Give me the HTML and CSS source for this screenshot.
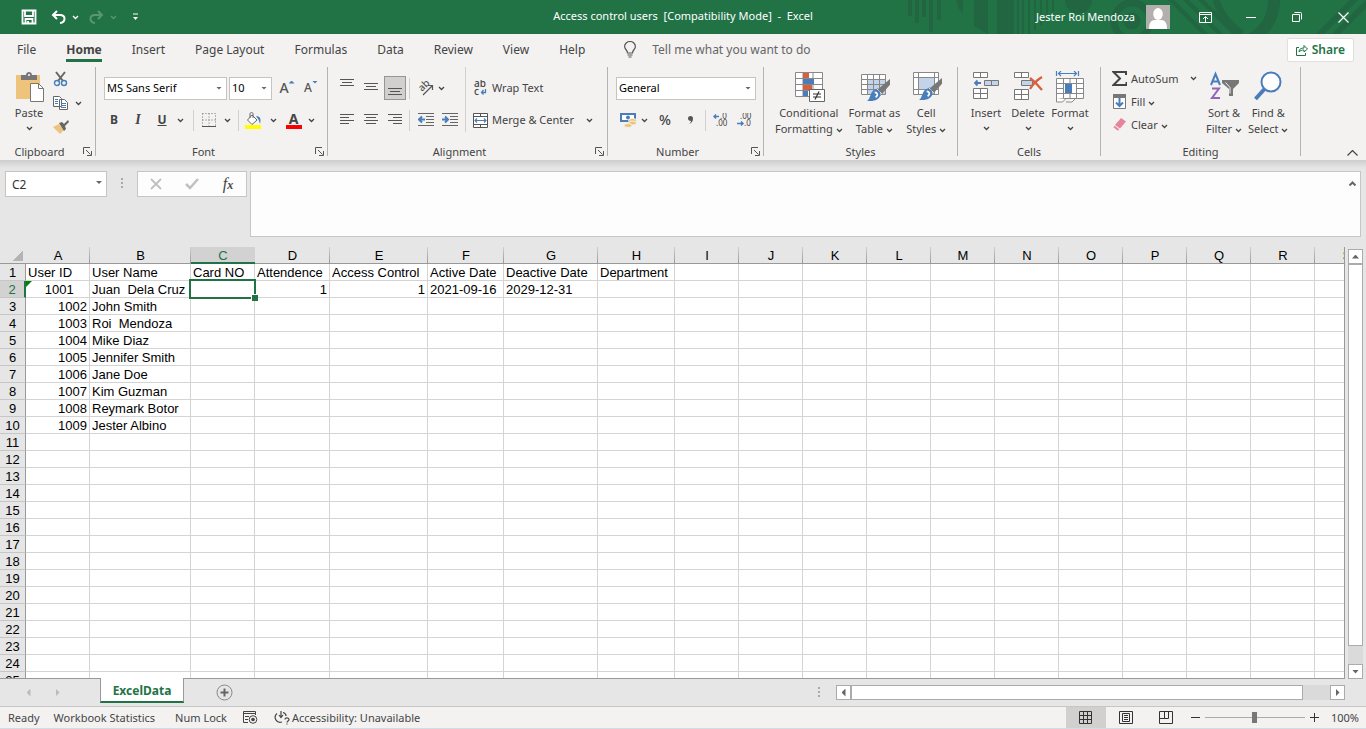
FILE: index.html
```html
<!DOCTYPE html>
<html lang="en">
<head>
  <meta charset="UTF-8" />
  <meta name="viewport" content="width=device-width, initial-scale=1.0" />
  <title>Access control users - Excel</title>
  <link rel="stylesheet" href="styles.css">
</head>
<body>
  <!-- Shared symbols -->
  <svg class="defs" aria-hidden="true">
    <symbol id="chev" viewBox="0 0 7 5"><path d="M1 1l2.500 2.500L6 1" fill="none" stroke="currentColor" stroke-width="1.300"/></symbol>
    <symbol id="launch" viewBox="0 0 9 9"><path d="M.5 7V.5H7M3 3l4.500 4.500M8.500 4v4.500H4" fill="none" stroke="#555"/></symbol>
    <symbol id="brush" viewBox="0 0 24 24"><path d="M24 0v6l-8 9-5-4z" fill="#777"/><path d="M11 10l5 5-2 2-5-5z" fill="#fff" stroke="#777"/><path d="M9 11c4 0 7 4 4 8-3 4-8 4-13 4 4-2 3-11 9-12z" fill="#4a7ebb"/><path d="M8 14c3 0 4 3 1 5" fill="none" stroke="#fff" stroke-width="1.800"/></symbol>
  </svg>

  <header class="titlebar">
    <svg class="pattern" width="486" height="34" aria-hidden="true">
      <g fill="#226541">
        <path d="M28 0h4v16h-4zM35 0h4v23h-4zM42 0h4v17h-4zM49 0h4v32h-4zM57 0h4v20h-4zM76 0h7v14C79 10 77 5 76 0zM94 0h14v34l-14-8zM117 0h17v34h-17zM137 0h2v34h-2zM142 0h2v34h-2zM148 0h2v34h-2zM154 0h2v30h-2zM160 0h2v25h-2zM166 0h2v20h-2zM172 0h2v12h-2zM185 0h27a13 13 0 0 1-27 0z"/>
        <path d="M388 0h12c0 13-5 25-13 34h-19c14-7 20-20 20-34zM436 34l34-34h8l-34 34zM452 34l34-34v8l-26 26zM288 0h6l34 34h-6zM303 0h6l34 34h-6zM318 0h6l34 34h-6z"/>
      </g>
      <g fill="none" stroke="#226541" stroke-width="7"><circle cx="252" cy="21" r="18"/><circle cx="252" cy="21" r="5"/><path d="M336 0c4 14 12 24 26 34"/></g>
    </svg>
    <div class="quick">
      <button class="save" aria-label="Save"><svg width="16" height="16" viewBox="0 0 16 16"><path d="M1.500 1.500h13v13h-13z M4 2v5h8V2M4.500 14v-4h7v4M7 12v2" fill="none" stroke="#fff" stroke-width="1.800"/></svg></button>
      <button aria-label="Undo"><svg width="15" height="14" viewBox="0 0 15 14"><path d="M6 1L2 5l4 4M2 5h7c6 0 6 7 0 8" fill="none" stroke="#fff" stroke-width="2"/></svg><svg class="chev"><use href="#chev"/></svg></button>
      <button class="off" aria-label="Redo"><svg width="15" height="14" viewBox="0 0 15 14"><path d="M9 1l4 4-4 4M13 5H6C0 5 0 12 6 13" fill="none" stroke="#fff" stroke-width="2"/></svg><svg class="chev"><use href="#chev"/></svg></button>
      <button class="custom" aria-label="Customize"><svg width="7" height="8" viewBox="0 0 7 8"><path d="M1 1h5" stroke="#fff"/><path d="M1 4h5L3.500 7z" fill="#fff"/></svg></button>
    </div>
    <h1>Access control users&nbsp; [Compatibility Mode]&nbsp; -&nbsp; Excel</h1>
    <div class="account">
      <span>Jester Roi Mendoza</span>
      <svg width="24" height="24" viewBox="0 0 24 24"><path fill="#b2afac" d="M0 0h24v24H0z"/><ellipse cx="12" cy="9" rx="4.800" ry="6" fill="#fff"/><path d="M3 24c0-6 2-9 6-9h6c4 0 6 3 6 9z" fill="#fff"/></svg>
      <div class="window-buttons">
        <button aria-label="Ribbon options"><svg width="13" height="11" viewBox="0 0 13 11"><path d="M.5.5h12v10H.5zM.5 2.500h12M6.500 10V5M4 7l2.500-2.500L9 7" fill="none" stroke="#fff"/></svg></button>
        <button aria-label="Minimize"><svg width="10" height="11" viewBox="0 0 10 11"><path d="M0 5.500h10" stroke="#fff"/></svg></button>
        <button aria-label="Restore"><svg width="11" height="11" viewBox="0 0 11 11"><path d="M.5 2.500h7v7h-7zM2.500.5h6q1 0 1 1v6" fill="none" stroke="#fff"/></svg></button>
        <button aria-label="Close"><svg width="11" height="11" viewBox="0 0 11 11"><path d="M.5.5l10 10M10.500.5l-10 10" stroke="#fff" stroke-width="1.200"/></svg></button>
      </div>
    </div>
  </header>

  <nav class="tabs">
    <button>File</button>
    <button class="active">Home</button>
    <button>Insert</button>
    <button>Page Layout</button>
    <button>Formulas</button>
    <button>Data</button>
    <button>Review</button>
    <button>View</button>
    <button>Help</button>
    <label class="tell">
      <svg width="12" height="17" viewBox="0 0 12 17"><path d="M3.500 12C3.500 9 .6 8.500.6 5.500a5.400 5 0 0 1 10.800 0c0 3-2.900 3.500-2.900 6.500zM3.500 14h5M4.500 16h3" fill="none" stroke="#555" stroke-width="1.200"/></svg>
      <input type="text" placeholder="Tell me what you want to do" aria-label="Tell me what you want to do">
    </label>
    <button class="share"><svg width="12" height="12" viewBox="0 0 12 12"><path d="M3 3.500H.5v8h9V9M3 8c0-3 2-4 5-4V1.500l3.500 3.500L8 8V6C6 6 4 6.500 3 8z" fill="none" stroke="#217346"/></svg>Share</button>
  </nav>

  <section class="ribbon">
    <div class="group clipboard">
      <div class="tools">
        <button class="big"><svg width="30" height="32" viewBox="0 0 30 32"><path d="M2 4h24v24H2z" fill="#eec47c"/><path d="M7 4h5c0-4 6-4 6 0h5v5H7z" fill="#777"/><circle cx="15" cy="4" r="1" fill="#fff"/><path d="M16.500 12.500h8l5 5v13h-13z" fill="#fff" stroke="#777"/><path d="M24.500 12.500v5h5" fill="none" stroke="#777"/></svg>Paste<svg class="chev"><use href="#chev"/></svg></button>
        <div class="stack">
          <button aria-label="Cut"><svg width="16" height="16" viewBox="0 0 16 16"><path d="M3 1l7 9M12 1l-7 9" stroke="#666" stroke-width="2"/><circle cx="4" cy="12" r="2.500" fill="none" stroke="#4a7ebb" stroke-width="1.400"/><circle cx="11" cy="12" r="2.500" fill="none" stroke="#4a7ebb" stroke-width="1.400"/></svg></button>
          <button aria-label="Copy"><svg width="16" height="16" viewBox="0 0 16 16"><path d="M.5 1.500h6l2 2v8h-8z M6.500 4.500h5l3 3v7h-8z" fill="#fff" stroke="#666"/><path d="M2 4.500h3M2 6.500h3M2 8.500h3M8 8.500h5M8 10.500h5M8 12.500h5" stroke="#4a7ebb"/></svg><svg class="chev"><use href="#chev"/></svg></button>
          <button aria-label="Format Painter"><svg width="16" height="16" viewBox="0 0 16 16"><path d="M0 8l6-3 5 6-4 4z" fill="#eec47c"/><path d="M6 4l3-1 2 2 4-4 1 2-4 4 1 3-2 2z" fill="#666"/></svg></button>
        </div>
      </div>
      <div class="caption"><span>Clipboard</span><button aria-label="Clipboard settings"><svg><use href="#launch"/></svg></button></div>
    </div>

    <div class="group font">
      <div class="tools rows">
        <div class="row">
          <label class="pick family"><select aria-label="Font"><option>MS Sans Serif</option></select></label>
          <label class="pick size"><select aria-label="Font size"><option>10</option></select></label>
          <button class="grow large" aria-label="Increase font size"><b>A</b><i class="up"></i></button>
          <button class="grow" aria-label="Decrease font size"><b>A</b><i class="down"></i></button>
        </div>
        <div class="row letters">
          <button><b>B</b></button>
          <button class="italic"><i>I</i></button>
          <button><b><u>U</u></b></button>
          <button class="more" aria-label="Underline options"><svg class="chev"><use href="#chev"/></svg></button>
          <span class="bar"></span>
          <button class="wide" aria-label="Borders"><svg width="14" height="14" viewBox="0 0 14 14"><path d="M.5.500h13v13M.5.500v13M7 .5v13M.5 7h13" fill="none" stroke="#777" stroke-dasharray="1 2"/><path d="M0 13.500h14" stroke="#555" stroke-width="1"/></svg><svg class="chev"><use href="#chev"/></svg></button>
          <span class="bar"></span>
          <button class="wide" aria-label="Fill color"><svg width="17" height="17" viewBox="0 0 17 17"><path d="M7 3l5 5-5 4.500L2.500 8z" fill="#fff" stroke="#666"/><path d="M5 6V2c0-2 3-2 3 0v4" fill="none" stroke="#666"/><path d="M11 4c5 0 5 4 4 8-1-3-1-4-2-5z" fill="#4a7ebb"/><path fill="#ff0" d="M0 13h16v4H0z"/></svg><svg class="chev"><use href="#chev"/></svg></button>
          <button class="wide color" aria-label="Font color"><b>A</b><svg class="chev"><use href="#chev"/></svg></button>
        </div>
      </div>
      <div class="caption"><span>Font</span><button aria-label="Font settings"><svg><use href="#launch"/></svg></button></div>
    </div>

    <div class="group align">
      <div class="tools">
        <div class="rows">
          <div class="row icons">
            <button aria-label="Top align"><svg width="14" height="18"><path d="M0 .5h14M2 3.500h10M0 6.500h14" stroke="#555"/></svg></button>
            <button aria-label="Middle align"><svg width="14" height="18"><path d="M0 4.500h14M2 7.500h10M0 10.500h14" stroke="#555"/></svg></button>
            <button class="pressed" aria-label="Bottom align"><svg width="14" height="18"><path d="M0 9.500h14M2 12.500h10M0 15.500h14" stroke="#555"/></svg></button>
            <span class="bar"></span>
            <button class="wide" aria-label="Orientation"><svg width="17" height="16" viewBox="0 0 17 16"><text x="0" y="0" transform="translate(5 12) rotate(-45)" class="slant">ab</text><path d="M6 15l9-9M11 5.500h4.500V10" fill="none" stroke="#555" stroke-width="1.200"/></svg><svg class="chev"><use href="#chev"/></svg></button>
          </div>
          <div class="row icons">
            <button aria-label="Align left"><svg width="14" height="14"><path d="M0 1.500h14M0 4.500h9M0 7.500h14M0 10.500h9" stroke="#555"/></svg></button>
            <button aria-label="Center"><svg width="14" height="14"><path d="M0 1.500h14M2 4.500h10M0 7.500h14M2 10.500h10" stroke="#555"/></svg></button>
            <button aria-label="Align right"><svg width="14" height="14"><path d="M0 1.500h14M5 4.500h9M0 7.500h14M5 10.500h9" stroke="#555"/></svg></button>
            <span class="bar"></span>
            <button aria-label="Decrease indent"><svg width="16" height="14"><path d="M0 .5h16M8 3.500h8M8 6.500h8M8 9.500h8M0 12.500h16" stroke="#666"/><path d="M7 6.500H1M4 3.500l-3 3 3 3" fill="none" stroke="#4a7ebb" stroke-width="2"/></svg></button>
            <button aria-label="Increase indent"><svg width="16" height="14"><path d="M0 .5h16M8 3.500h8M8 6.500h8M8 9.500h8M0 12.500h16" stroke="#666"/><path d="M0 6.500h6M3 3.500l3 3-3 3" fill="none" stroke="#4a7ebb" stroke-width="2"/></svg></button>
          </div>
        </div>
        <div class="rows wraps">
          <div class="row"><button class="text"><svg width="15" height="16" viewBox="0 0 15 16"><text x="1" y="7" class="abc">ab</text><text x="1" y="15" class="abc">c</text><path d="M12.500 9v3.500H8.500M10.500 10l-2 2.500 2 2" fill="none" stroke="#4a7ebb" stroke-width="1.300"/></svg>Wrap Text</button></div>
          <div class="row"><button class="text"><svg width="15" height="15" viewBox="0 0 15 15"><path d="M.5.5h14v14H.5zM.5 3.500h14M.5 11.500h14M7.500.5v3M7.500 11.500v3" fill="#fff" stroke="#555"/><path d="M2 7.500h11M4 5.500l-2 2 2 2M11 5.500l2 2-2 2" fill="none" stroke="#4a7ebb" stroke-width="1.200"/></svg>Merge &amp; Center</button><button aria-label="Merge options"><svg class="chev"><use href="#chev"/></svg></button></div>
        </div>
      </div>
      <div class="caption"><span>Alignment</span><button aria-label="Alignment settings"><svg><use href="#launch"/></svg></button></div>
    </div>

    <div class="group number">
      <div class="tools rows">
        <div class="row"><label class="pick format"><select aria-label="Number format"><option>General</option></select></label></div>
        <div class="row numbers">
          <button class="wide" aria-label="Accounting format"><svg width="17" height="17" viewBox="0 0 17 17"><path fill="#4a7ebb" d="M0 1h16v9H0z"/><path fill="#fff" d="M2 3h12v5H2z"/><circle cx="8" cy="5.500" r="2" fill="#4a7ebb"/><g fill="#eec47c" stroke="#f3f2f1"><ellipse cx="12.500" cy="8.500" rx="4" ry="2"/><ellipse cx="12.500" cy="11" rx="4" ry="2"/><ellipse cx="8" cy="13.500" rx="4" ry="2"/></g></svg><svg class="chev"><use href="#chev"/></svg></button>
          <button class="percent">%</button>
          <button class="comma" aria-label="Comma style"><svg width="5" height="8"><path d="M0 2.500a2.500 2.500 0 1 1 5 0C5 5 4 7 1 8c1-1 2-2 2-3C1 5 0 4 0 2.500z" fill="#555"/></svg></button>
          <span class="bar"></span>
          <button aria-label="Increase decimal"><svg width="16" height="14" viewBox="0 0 16 14"><text x="7" y="6" class="dec">.0</text><text x="3" y="13" class="dec">.00</text><path d="M6 3.500H1M3 1.500l-2 2 2 2" fill="none" stroke="#4a7ebb" stroke-width="1.500"/></svg></button>
          <button aria-label="Decrease decimal"><svg width="16" height="14" viewBox="0 0 16 14"><text x="3" y="6" class="dec">.00</text><text x="7" y="13" class="dec">.0</text><path d="M0 10.500h6M4 8.500l2 2-2 2" fill="none" stroke="#4a7ebb" stroke-width="1.500"/></svg></button>
        </div>
      </div>
      <div class="caption"><span>Number</span><button aria-label="Number settings"><svg><use href="#launch"/></svg></button></div>
    </div>

    <div class="group styles">
      <div class="tools">
        <button class="big"><svg width="32" height="32" viewBox="0 0 32 32"><path d="M2.500 1.500h27v24h-27zM10 1.500v24M20 1.500v24M2.500 7.500h27M2.500 13.500h27M2.500 19.500h27" fill="#fff" stroke="#888"/><path fill="#d65f3d" d="M10 2h6v5h-6zM10 14h9v5h-9z"/><path fill="#4a7ebb" d="M10 8h11v5H10zM10 20h5v5h-5z"/><path d="M16.500 18.500h15v12h-15z" fill="#fff" stroke="#666"/><path d="M20 23h8M20 26h8M26 20.500l-4 8" stroke="#333" stroke-width="1.200"/></svg><span>Conditional<br>Formatting <svg class="chev"><use href="#chev"/></svg></span></button>
        <button class="big"><svg width="32" height="32" viewBox="0 0 32 32"><path d="M3.500 3.500h24v20h-24z" fill="#fff"/><path d="M9 8h18v15H9z" fill="#c2d3ea"/><path d="M3.500 3.500h24v20h-24zM9.500 3.500v20M15.500 3.500v20M21.500 3.500v20M3.500 8.500h24M3.500 13.500h24M3.500 18.500h24" fill="none" stroke="#888"/><use href="#brush" x="9" y="8" width="23" height="23"/></svg><span>Format as<br>Table <svg class="chev"><use href="#chev"/></svg></span></button>
        <button class="big"><svg width="32" height="32" viewBox="0 0 32 32"><path d="M3.500 1.500h25v22h-25zM8.500 1.500v22M24.500 1.500v22M3.500 6.500h25M3.500 18.500h25" fill="#fff" stroke="#888"/><path d="M9 7h15v11H9z" fill="#c2d3ea"/><use href="#brush" x="9" y="7" width="23" height="23"/></svg><span>Cell<br>Styles <svg class="chev"><use href="#chev"/></svg></span></button>
      </div>
      <div class="caption"><span>Styles</span></div>
    </div>

    <div class="group cells">
      <div class="tools">
        <button class="big"><svg width="28" height="32" viewBox="0 0 28 32"><path d="M1.500 1.500h14v5h-14zM8.500 1.500v5M1.500 17.500h14v10h-14zM8.500 17.500v10M1.500 22.500h14" fill="#fff" stroke="#777"/><path d="M12.500 9.500h14v5h-14zM19.500 9.500v5" fill="#c2d3ea" stroke="#777"/><path d="M9 12H3M5.500 9.500L3 12l2.500 2.500" fill="none" stroke="#4a7ebb" stroke-width="1.800"/></svg>Insert<svg class="chev"><use href="#chev"/></svg></button>
        <button class="big"><svg width="32" height="32" viewBox="0 0 32 32"><path d="M2.500 1.500h14v5h-14zM9.500 1.500v5M2.500 18.500h14v10h-14zM9.500 18.500v10M2.500 23.500h14" fill="#fff" stroke="#777"/><path d="M9.500 9.500h11v5h-11z" fill="#c2d3ea" stroke="#777"/><path d="M18 7c4 3 8 7 12 12M30 6c-5 3-9 7-12 12" fill="none" stroke="#d65f3d" stroke-width="2.200"/></svg>Delete<svg class="chev"><use href="#chev"/></svg></button>
        <button class="big"><svg width="30" height="32" viewBox="0 0 30 32"><path d="M1.500 7.500h27v20h-27zM8.500 7.500v20M21.500 7.500v20M15 7.500v5M15 22v5M1.500 12.500h27M1.500 22.500h27M1.500 17.500h7M21.500 17.500h7" fill="#fff" stroke="#888"/><path fill="#4a7ebb" d="M10 13h7v9h-7z"/><path d="M1.500 27v4h6l3-3M11 31h6l3-3" fill="#fff" stroke="#888"/><path d="M1.500 0v5M23.500 0v5M3 2.500h19M6 0L3.500 2.500 6 5M19 0l2.500 2.500L19 5" fill="none" stroke="#4a7ebb" stroke-width="1.200"/></svg>Format<svg class="chev"><use href="#chev"/></svg></button>
      </div>
      <div class="caption"><span>Cells</span></div>
    </div>

    <div class="group editing">
      <div class="tools">
        <div class="list">
          <button class="text sum"><svg width="15" height="16" viewBox="0 0 15 16"><path d="M14 4V1H1.500L8 7.500 1.500 14H14.500v-3" fill="none" stroke="#444" stroke-width="2"/></svg>AutoSum<svg class="chev"><use href="#chev"/></svg></button>
          <button class="text"><svg width="15" height="15" viewBox="0 0 15 15"><path d="M1.500.5h12v14h-12z" fill="#fff" stroke="#777"/><path d="M1 0h13v4H1z" fill="#777"/><path d="M7.500 4v8M4 8.500L7.500 12 11 8.500" fill="none" stroke="#4a7ebb" stroke-width="2"/></svg><span>Fill <svg class="chev"><use href="#chev"/></svg></span></button>
          <button class="text"><svg width="15" height="15" viewBox="0 0 15 15"><path d="M3 8l6-7 5 3.500-6 7z" fill="#e8839b"/><path d="M2 9.500l4.500 3.500" stroke="#e8839b" stroke-width="2"/></svg><span>Clear <svg class="chev"><use href="#chev"/></svg></span></button>
        </div>
        <button class="big"><svg width="32" height="32" viewBox="0 0 32 32"><path d="M3 14L7.500 3 12 14M4.500 10.500h6" fill="none" stroke="#4a7ebb" stroke-width="2"/><path d="M4 17.500h7L4 27h8" fill="none" stroke="#9464b8" stroke-width="2"/><path d="M14 9h17v3l-6 6v7h-4v-7l-7-6z" fill="#777"/><path d="M17.500 11.500l4.500 5v6" fill="none" stroke="#f3f2f1"/></svg><span>Sort &amp;<br>Filter <svg class="chev"><use href="#chev"/></svg></span></button>
        <button class="big"><svg width="30" height="32" viewBox="0 0 30 32"><path d="M2.500 28l9-10" stroke="#4a7ebb" stroke-width="4"/><circle cx="18" cy="11" r="9.500" fill="#fff" stroke="#4a7ebb" stroke-width="2"/></svg><span>Find &amp;<br>Select <svg class="chev"><use href="#chev"/></svg></span></button>
      </div>
      <div class="caption"><span>Editing</span></div>
    </div>
    <button class="collapse" aria-label="Collapse the ribbon"><svg width="11" height="6"><path d="M.5 5.500l5-5 5 5" fill="none" stroke="#444" stroke-width="1.200"/></svg></button>
  </section>

  <section class="formula">
    <label class="pick namebox"><input type="text" value="C2" aria-label="Name Box"></label>
    <span class="dots"></span>
    <div class="fx">
      <button aria-label="Cancel"><svg width="12" height="12"><path d="M1 1l10 10M11 1L1 11" stroke="#c0c0c0" stroke-width="1.800"/></svg></button>
      <button aria-label="Enter"><svg width="14" height="12"><path d="M1 6l4 4 8-9" fill="none" stroke="#c0c0c0" stroke-width="2.500"/></svg></button>
      <button class="fn"><i>f<small>x</small></i></button>
    </div>
    <div class="input">
      <textarea aria-label="Formula bar"></textarea>
      <button aria-label="Collapse formula bar"><svg width="7" height="5"><path d="M.5 4.500l3-3 3 3" fill="none" stroke="#666" stroke-width="2"/></svg></button>
    </div>
  </section>

  <main>
    <div class="sheet"><table id="grid"></table></div>
    <div class="vscroll">
      <button aria-label="Scroll up"><i class="up"></i></button>
      <div class="thumb"></div>
      <button aria-label="Scroll down"><i class="down"></i></button>
    </div>
  </main>

  <div class="sheets">
    <button class="arrow" aria-label="Previous sheet"><i class="left"></i></button>
    <button class="arrow" aria-label="Next sheet"><i class="right"></i></button>
    <button class="sheet-tab">ExcelData</button>
    <button class="add" aria-label="New sheet"><svg width="17" height="17"><circle cx="8.500" cy="8.500" r="7.500" fill="none" stroke="#888"/><path d="M8.500 4.500v8M4.500 8.500h8" stroke="#666" stroke-width="2"/></svg></button>
    <span class="dots"></span>
    <div class="hscroll">
      <button aria-label="Scroll left"><i class="left"></i></button>
      <div class="thumb"></div>
      <button aria-label="Scroll right"><i class="right"></i></button>
    </div>
  </div>

  <footer class="status">
    <span class="ready">Ready</span>
    <span class="stats">Workbook Statistics</span>
    <span>Num Lock</span>
    <button aria-label="Record macro"><svg width="15" height="13" viewBox="0 0 15 13"><path d="M5 11.500H.5V.5h12V4M.5 2.500h12M2 5.500h4M2 8.500h3" fill="none" stroke="#444"/><circle cx="10" cy="8.500" r="3.800" fill="#f3f2f1" stroke="#444"/><circle cx="10" cy="8.500" r="1.800" fill="#444"/></svg></button>
    <button class="text access"><svg width="16" height="14" viewBox="0 0 16 14"><path d="M3 2.500A5 5 0 0 0 8 11M7 0v6M5 4l2 2.500L9 4M9 1.500c2 .5 3 2 3 3.500" fill="none" stroke="#444" stroke-width="1.200"/><path d="M11 8.500c0-2.500 4-2 4 0 0 1.500-2 1.500-2 3M13 12.500v1" fill="none" stroke="#444" stroke-width="1.200"/></svg>Accessibility: Unavailable</button>
    <div class="views">
      <button class="active" aria-label="Normal"><svg width="13" height="13"><path d="M.5.5h12v12H.5zM4.500.5v12M8.500.5v12M.5 4.500h12M.5 8.500h12" fill="none" stroke="#333"/></svg></button>
      <button aria-label="Page layout"><svg width="14" height="13"><path d="M.5.5h13v12H.5zM3.500 2.500h7v8h-7zM5 4.500h4M5 6.500h4M5 8.500h4" fill="none" stroke="#333"/></svg></button>
      <button aria-label="Page break preview"><svg width="14" height="13"><path d="M.5.500h13v12H.5zM.5 7.500h9v-7M5.500.5v7" fill="none" stroke="#333"/></svg></button>
    </div>
    <div class="zoom">
      <button aria-label="Zoom out"><svg width="9" height="9"><path d="M0 4.500h9" stroke="#333"/></svg></button>
      <input type="range" min="0" max="100" value="50" aria-label="Zoom">
      <button aria-label="Zoom in"><svg width="9" height="9"><path d="M0 4.500h9M4.500 0v9" stroke="#333"/></svg></button>
      <span>100%</span>
    </div>
  </footer>

  <script>
    const widths = [64, 101, 64, 75, 98, 76, 94, 77];
    const letters = 'ABCDEFGHIJKLMNOPQRSTUVWXYZ'.split('');
    const data = [
      ['User ID', 'User Name', 'Card NO', 'Attendence', 'Access Control', 'Active Date', 'Deactive Date', 'Department'],
      [' 1001', 'Juan  Dela Cruz', '', 1, 1, '2021-09-16', '2029-12-31'],
      [1002, 'John Smith'],
      [1003, 'Roi  Mendoza'],
      [1004, 'Mike Diaz'],
      [1005, 'Jennifer Smith'],
      [1006, 'Jane Doe'],
      [1007, 'Kim Guzman'],
      [1008, 'Reymark Botor'],
      [1009, 'Jester Albino']
    ];

    let html = '<colgroup><col style="width:26px">';
    letters.forEach((l, i) => html += `<col style="width:${widths[i] || 64}px">`);
    html += '</colgroup><thead><tr><th class="corner"></th>';
    letters.forEach(l => html += `<th class="${l === 'C' ? 'selected' : ''}">${l}</th>`);
    html += '</tr></thead><tbody>';
    for (let r = 0; r < 40; r++) {
      html += `<tr><th class="${r === 1 ? 'selected' : ''}">${r + 1}</th>`;
      letters.forEach((l, c) => {
        const value = data[r] && data[r][c] !== undefined ? data[r][c] : '';
        let cls = typeof value === 'number' ? 'num' : '';
        if (r === 1 && c === 0) cls = 'flag';
        if (r === 1 && c === 2) cls = 'current';
        html += `<td class="${cls}">${value}</td>`;
      });
      html += '</tr>';
    }
    document.getElementById('grid').innerHTML = html + '</tbody>';
  </script>
</body>
</html>
```
FILE: styles.css
```css
* {
  box-sizing: border-box;
}
body {
  margin: 0;
  height: 100vh;
  display: flex;
  flex-direction: column;
  overflow: hidden;
  font-family: 'Noto Sans', 'Segoe UI', sans-serif;
  font-size: 11px;
  line-height: 16px;
  color: #444;
  background: #e6e6e6;
}
button, input, select, textarea {
  font: inherit;
  color: inherit;
}
button {
  background: transparent;
  border: none;
  padding: 0;
  display: flex;
  align-items: center;
  justify-content: center;
  white-space: nowrap;
}
svg {
  flex: none;
}
.defs {
  position: absolute;
  width: 0;
  height: 0;
}
.chev {
  width: 7px;
  height: 5px;
}

/* Small triangles */
.up, .down, .left, .right {
  width: 7px;
  height: 4px;
  background: #666;
}
.up {
  clip-path: polygon(50% 0, 100% 100%, 0 100%);
}
.down {
  clip-path: polygon(0 0, 100% 0, 50% 100%);
}
.left, .right {
  width: 4px;
  height: 8px;
}
.left {
  clip-path: polygon(100% 0, 100% 100%, 0 50%);
}
.right {
  clip-path: polygon(0 0, 100% 50%, 0 100%);
}

/* Title bar */
.titlebar {
  position: relative;
  flex: none;
  height: 34px;
  background: #217346;
  color: #fff;
  display: flex;
  align-items: center;
}
.pattern {
  position: absolute;
  right: 0;
  top: 0;
}
.quick {
  display: flex;
  align-items: center;
  gap: 10px;
  flex: 1 1 0;
}
.quick button {
  gap: 6px;
}
.quick .save {
  margin: 0 4px 0 21px;
}
.quick .off {
  opacity: 0.25;
}
.quick .custom {
  margin-left: 5px;
}
.titlebar h1 {
  margin: 0;
  font-size: 11px;
  line-height: 18px;
  padding-bottom: 2px;
  font-weight: 400;
}
.account {
  position: relative;
  flex: 1 1 0;
  display: flex;
  justify-content: flex-end;
  align-items: center;
}
.account span {
  margin-right: 11px;
}
.window-buttons {
  display: flex;
  padding-left: 12px;
}
.window-buttons button {
  width: 46px;
  height: 32px;
}

/* Ribbon tabs */
.tabs {
  flex: none;
  height: 33px;
  display: flex;
  align-items: center;
  padding: 0 12px 2px 2px;
  background: #f3f2f1;
  font-size: 12px;
}
.tabs button {
  position: relative;
  height: 30px;
  padding: 0 15px;
}
.tabs .active {
  font-weight: 700;
}
.tabs .active::after {
  content: '';
  position: absolute;
  left: 15px;
  right: 15px;
  bottom: 3px;
  height: 3px;
  background: #217346;
}
.tell {
  display: flex;
  align-items: center;
  flex: 1;
  gap: 16px;
  padding-left: 24px;
}
.tell input {
  width: 200px;
  padding: 0;
  border: none;
  outline: none;
  background: transparent;
}
.tell input::placeholder {
  color: #666;
  opacity: 1;
}
.tabs .share {
  height: 24px;
  padding: 0 8px;
  gap: 4px;
  background: #fff;
  border: 1px solid #e1dfdd;
  border-radius: 2px;
  color: #217346;
  font-weight: 600;
}

/* Ribbon */
.ribbon {
  flex: none;
  display: flex;
  height: 93px;
  padding-bottom: 4px;
  background: #f3f2f1;
}
.group {
  flex: none;
  display: flex;
  flex-direction: column;
  border-right: 1px solid #b5b3b1;
}
.tools {
  flex: 1;
  display: flex;
  align-items: flex-start;
}
.caption {
  display: flex;
  align-items: center;
  height: 13px;
  line-height: 13px;
  margin-bottom: -2px;
}
.caption span {
  flex: 1;
  text-align: center;
}
.caption button {
  width: 16px;
}
.caption svg {
  width: 9px;
  height: 9px;
}
.big {
  flex-direction: column;
  padding-top: 4px;
}
.big > svg:first-child {
  margin-bottom: 2px;
}
.big > .chev {
  margin-top: 5px;
}
.rows {
  display: flex;
  flex-direction: column;
  align-items: flex-start;
  padding-top: 9px;
  gap: 8px;
}
.row {
  display: flex;
  align-items: center;
  height: 24px;
}
.row button {
  height: 24px;
}
.bar {
  width: 1px;
  height: 21px;
  background: #d2d0ce;
}
.text {
  gap: 4px;
}
.wide {
  gap: 8px;
}
.pick {
  position: relative;
  height: 23px;
  background: #fff;
  border: 1px solid #c6c4c2;
  color: #000;
}
.pick::after {
  content: '';
  position: absolute;
  right: 4px;
  top: 9px;
  width: 6px;
  height: 3px;
  background: #666;
  clip-path: polygon(0 0, 100% 0, 50% 100%);
}
.pick select, .pick input {
  appearance: none;
  display: block;
  width: 100%;
  height: 100%;
  padding: 0 2px;
  border: none;
  background: transparent;
  outline: none;
}

.clipboard {
  width: 96px;
}
.clipboard .tools {
  padding-left: 14px;
}
.stack {
  padding: 4px 0 0 9px;
  display: flex;
  flex-direction: column;
  align-items: flex-start;
  gap: 8px;
}
.stack button {
  gap: 6px;
}

.font {
  width: 232px;
}
.font .tools {
  padding-left: 8px;
}
.family {
  width: 123px;
}
.size {
  width: 43px;
  margin-left: 2px;
}
.grow {
  width: 24px;
  color: #555;
  font-size: 12px;
}
.large {
  margin-left: 3px;
  font-size: 14px;
}
.grow .up, .grow .down {
  width: 6px;
  height: 3px;
  margin-bottom: 12px;
  background: #4a7ebb;
}
.grow b {
  font-weight: 500;
}
.letters {
  margin-left: -2px;
}
.letters button {
  width: 24px;
  font-size: 12px;
}
.letters .italic {
  font-family: 'Liberation Serif', serif;
  font-weight: 700;
  font-size: 14px;
}
.letters .more {
  width: 12px;
  margin-right: 7px;
}
.letters .wide {
  width: 44px;
}
.letters .color {
  width: 34px;
  gap: 6px;
}
.color b {
  width: 16px;
  height: 17px;
  line-height: 14px;
  font-size: 14px;
  border-bottom: 4px solid #f00;
}

.align {
  width: 280px;
}
.align .tools {
  padding-left: 7px;
}
.icons button {
  width: 24px;
}
.icons .pressed {
  width: 22px;
  margin: 0 1px;
  background: #d2d0ce;
  border: 1px solid #979593;
}
.icons .bar {
  margin: 0 4px 0 2px;
}
.icons .wide {
  width: 34px;
  gap: 4px;
}
.wraps {
  margin-left: 3px;
  padding-left: 7px;
  border-left: 1px solid #d2d0ce;
}
.wraps button + button {
  margin-left: 12px;
}
.slant {
  font-size: 10px;
  font-weight: 500;
  fill: #555;
}
.abc {
  font-size: 10px;
  font-weight: 500;
  fill: #444;
}

.number {
  width: 156px;
}
.number .tools {
  padding-left: 8px;
}
.format {
  width: 140px;
}
.numbers button {
  width: 24px;
}
.numbers .wide {
  width: 36px;
  gap: 4px;
}
.numbers .percent {
  width: 26px;
  font-size: 14px;
  font-weight: 500;
}
.numbers .bar {
  margin: 0 3px;
}
.dec {
  font-size: 8px;
  fill: #444;
}

.styles {
  width: 194px;
}
.styles .tools {
  padding-left: 11px;
  gap: 6px;
}
.cells {
  width: 143px;
}
.cells .tools {
  padding-left: 10px;
  gap: 6px;
}
.cells .big {
  width: 36px;
}
.editing {
  width: 200px;
}
.editing .tools {
  padding-left: 11px;
}
.editing .list {
  width: 94px;
}
.list button {
  height: 23px;
}
.list .sum .chev {
  margin-left: 7px;
}
.editing .big + .big {
  margin-left: 6px;
}
.collapse {
  margin-left: auto;
  align-self: flex-end;
  padding: 0 8px 0 0;
}

/* Formula bar */
.formula {
  flex: none;
  display: flex;
  align-items: flex-start;
  padding: 11px 5px 10px;
  background: linear-gradient(#cdcdcd, #e6e6e6 8px);
}
.namebox {
  width: 102px;
  height: 26px;
  font-size: 12px;
}
.namebox input {
  padding-left: 6px;
  color: #333;
}
.dots {
  width: 2px;
  height: 11px;
  margin: 7px 14px;
  background: repeating-linear-gradient(#aaa 0 2px, transparent 2px 4px);
}
.fx {
  display: flex;
  width: 110px;
  height: 26px;
  background: #fdfdfd;
  border: 1px solid #c6c6c6;
}
.fx button {
  flex: 1;
}
.fn {
  font-family: 'Liberation Serif', serif;
  font-size: 16px;
}
.fn small {
  font-size: 12px;
  font-weight: 700;
}
.input {
  flex: 1;
  display: flex;
  align-items: flex-start;
  height: 66px;
  margin-left: 3px;
  background: #fdfdfd;
  border: 1px solid #c6c6c6;
}
.input textarea {
  flex: 1;
  height: 64px;
  border: none;
  outline: none;
  resize: none;
  background: transparent;
}
.input button {
  padding: 9px 4px;
}

/* Grid */
main {
  flex: 1;
  min-height: 0;
  display: flex;
}
.sheet {
  flex: 1;
  min-width: 0;
  overflow: hidden;
  background: #fff;
  border-right: 1px solid #999;
  border-bottom: 1px solid #999;
}
table {
  table-layout: fixed;
  width: 100px;
  border-spacing: 0;
  font-family: 'Liberation Sans', Arial, sans-serif;
  font-size: 13px;
  line-height: 14px;
  color: #000;
}
th {
  height: 17px;
  padding: 2px 0 0;
  font-weight: 400;
  background: #e6e6e6;
}
thead th {
  background: linear-gradient(#d0d0d0, #999) right / 1px 100% no-repeat #e6e6e6;
  border-bottom: 1px solid #999;
}
thead .corner {
  background: linear-gradient(135deg, transparent 50%, #b4b4b4 50%) 13px 4px / 10px 10px no-repeat #e6e6e6;
}
tbody th {
  border-right: 1px solid #999;
  border-bottom: 1px solid #c6c6c6;
}
th.selected {
  background: #d2d2d2;
  color: #217346;
}
thead .selected {
  border-bottom: 2px solid #217346;
  line-height: 13px;
}
tbody .selected {
  border-right: 2px solid #217346;
}
td {
  height: 17px;
  padding: 2px 2px 0;
  white-space: pre;
  border-right: 1px solid #d4d4d4;
  border-bottom: 1px solid #d4d4d4;
}
.num {
  text-align: right;
}
.flag, .current {
  position: relative;
  z-index: 1;
}
.flag {
  text-align: center;
}
.flag::before {
  content: '';
  position: absolute;
  left: 0;
  top: 0;
  border-top: 6px solid #008000;
  border-right: 6px solid transparent;
}
.current::before {
  content: '';
  position: absolute;
  inset: -2px;
  border: 2px solid #217346;
}
.current::after {
  content: '';
  position: absolute;
  right: -4px;
  bottom: -4px;
  width: 6px;
  height: 6px;
  background: #217346;
  border: 1px solid #fff;
  border-width: 1px 0 0 1px;
}

/* Scroll bars */
.vscroll, .hscroll {
  display: flex;
  background: #dadada;
}
.vscroll {
  flex-direction: column;
  width: 15px;
  margin: 2px 3px 0;
}
.hscroll {
  width: 509px;
  height: 15px;
  margin-right: 21px;
}
.vscroll button, .hscroll button {
  width: 15px;
  height: 15px;
  flex: none;
  background: #fff;
  border: 1px solid #ababab;
}
.thumb {
  flex: 1;
  background: #fff;
  border: 1px solid #ababab;
}
.vscroll .thumb {
  margin-bottom: 18px;
}
.hscroll .thumb {
  margin-right: 27px;
}

/* Sheet tabs */
.sheets {
  flex: none;
  display: flex;
  align-items: center;
  height: 28px;
  padding-left: 14px;
  border-bottom: 1px solid #c6c6c6;
}
.arrow {
  width: 29px;
}
.arrow i {
  background: #bbb;
}
.sheet-tab {
  align-self: flex-start;
  width: 84px;
  height: 25px;
  margin: -1px 0 0 28px;
  padding-top: 3px;
  background: #fff;
  border: 1px solid #999;
  border-top: none;
  border-bottom: 2px solid #217346;
  color: #217346;
  font-size: 12px;
  font-weight: 700;
}
.add {
  margin-left: 32px;
}
.sheets .dots {
  margin: 0 16px 0 auto;
}

/* Status bar */
.status {
  flex: none;
  display: flex;
  align-items: center;
  height: 22px;
  padding-left: 8px;
  background: #f3f2f1;
  border-bottom: 1px solid #d5dbe3;
}
.ready {
  margin-right: 14px;
}
.stats {
  margin-right: 20px;
}
.status > button {
  margin-left: 16px;
}
.status .text {
  gap: 2px;
}
.views {
  display: flex;
  margin-left: auto;
}
.views button {
  width: 40px;
  height: 21px;
}
.views .active {
  background: #d2d0ce;
}
.zoom {
  display: flex;
  align-items: center;
  padding: 0 7px 0 5px;
}
.zoom input {
  appearance: none;
  width: 100px;
  height: 11px;
  margin: 0 5px;
  background: linear-gradient(#aaa, #aaa) center / 100% 1px no-repeat;
}
.zoom input::-webkit-slider-thumb {
  appearance: none;
  width: 5px;
  height: 11px;
  background: #777;
}
.zoom span {
  margin-left: 12px;
}
```
